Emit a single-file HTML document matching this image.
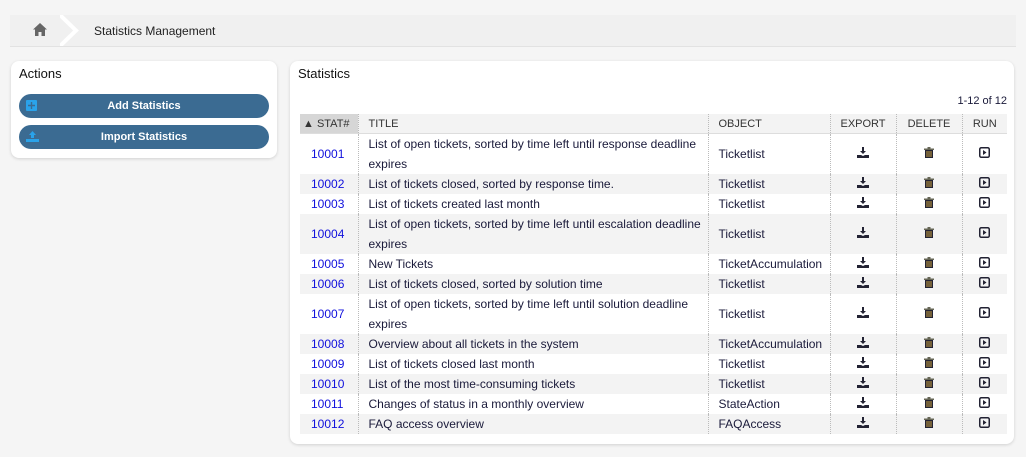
<!DOCTYPE html><html><head><style>
body{margin:0;width:1026px;height:457px;background:#f5f5f5;font-family:"Liberation Sans",sans-serif;font-size:12px;color:#1a1a3a;position:relative;overflow:hidden}
.bc{position:absolute;left:10px;top:15px;width:1006px;height:31px;background:#f0f0f0;border-bottom:1px solid #e2e2e2}
.panel{position:absolute;background:#fff;border-radius:8px;box-shadow:0 1px 3px rgba(0,0,0,.15)}
h2{font-size:13px;font-weight:normal;margin:0;position:absolute;left:8px;top:5px;color:#111}
.btn{position:absolute;left:8px;width:250px;height:24px;border-radius:12px;background:#3b6b92;color:#fff;font-weight:bold;font-size:11px;text-align:center;line-height:25px}
.btn svg{position:absolute;left:7px;top:6px}
table{position:absolute;left:10px;top:53px;border-collapse:collapse;width:707px;table-layout:fixed}
th{height:19px;font-weight:normal;font-size:11px;text-align:left;padding:0 0 0 10px;background:#f3f3f3;border-bottom:1px solid #ddd;border-left:1px dotted #bbb;color:#333}
th.c,td.c{text-align:center;padding:0}
td{padding:0 0 0 10px;line-height:20px;border-left:1px dotted #bbb;vertical-align:middle}
tr:nth-child(even) td{background:#f3f3f3}
td:first-child,th:first-child{border-left:none}
a{color:#1010dd;text-decoration:none}
</style></head><body>
<div class="bc">
<svg style="position:absolute;left:23px;top:8px" width="14" height="13" viewBox="0 0 14 13"><path d="M7 0L0 6.5h2V13h3.5V9h3v4H12V6.5h2z" fill="#666"/></svg>
<svg style="position:absolute;left:50px;top:0" width="20" height="31"><path d="M0 0L16 15.5 0 31" fill="#f0f0f0" stroke="#fff" stroke-width="4"/></svg>
<div style="position:absolute;left:84px;top:9px;color:#222">Statistics Management</div>
</div>
<div class="panel" style="left:11px;top:61px;width:266px;height:97px">
<h2>Actions</h2>
<div class="btn" style="top:33px"><svg width="11" height="11"><rect width="11" height="11" rx="1" fill="#2aa3ea"/><path d="M5.5 2v7M2 5.5h7" stroke="#3b6b92" stroke-width="1.4"/></svg>Add Statistics</div>
<div class="btn" style="top:64px"><svg width="13" height="11" viewBox="0 0 13 11"><path d="M6.5 0L10 4H8v3H5V4H3z" fill="#2aa3ea"/><path d="M0 8h13v3H0z" fill="#2aa3ea"/></svg>Import Statistics</div>
</div>
<div class="panel" style="left:290px;top:61px;width:724px;height:383px">
<h2>Statistics</h2>
<div style="position:absolute;right:7px;top:34px;font-size:11px">1-12 of 12</div>
<table>
<colgroup><col style="width:58px"><col style="width:350px"><col style="width:122px"><col style="width:66px"><col style="width:66px"><col></colgroup>
<tr><th style="background:#d6d6d6;padding-left:3px">▲ STAT#</th><th>TITLE</th><th>OBJECT</th><th class="c">EXPORT</th><th class="c">DELETE</th><th class="c">RUN</th></tr>
<tbody id="b"></tbody>
</table></div>
<script>
var d=[["10001","List of open tickets, sorted by time left until response deadline expires","Ticketlist"],["10002","List of tickets closed, sorted by response time.","Ticketlist"],["10003","List of tickets created last month","Ticketlist"],["10004","List of open tickets, sorted by time left until escalation deadline expires","Ticketlist"],["10005","New Tickets","TicketAccumulation"],["10006","List of tickets closed, sorted by solution time","Ticketlist"],["10007","List of open tickets, sorted by time left until solution deadline expires","Ticketlist"],["10008","Overview about all tickets in the system","TicketAccumulation"],["10009","List of tickets closed last month","Ticketlist"],["10010","List of the most time-consuming tickets","Ticketlist"],["10011","Changes of status in a monthly overview","StateAction"],["10012","FAQ access overview","FAQAccess"]];
var ex='<svg width="12" height="11" viewBox="0 0 12 11"><path d="M5 0h2v4h2L6 7 3 4h2z" fill="#223"/><path d="M0 8h4l2 1 2-1h4v3H0z" fill="#223"/></svg>';
var de='<svg width="10" height="11" viewBox="0 0 10 11"><path d="M0 1.5h10v1.5H0zM3.5 0h3v1.5h-3z" fill="#665"/><path d="M1 3h8v8H1z" fill="#223"/><path d="M2.5 4h1v6h-1zM4.5 4h1v6h-1zM6.5 4h1v6h-1z" fill="#c8a040"/></svg>';
var ru='<svg width="11" height="11" viewBox="0 0 11 11"><rect x=".75" y=".75" width="9.5" height="9.5" rx="1.5" fill="none" stroke="#223" stroke-width="1.5"/><path d="M4 3l3.5 2.5L4 8z" fill="#223"/></svg>';
var h='';d.forEach(function(r){h+='<tr><td style="padding-left:11px"><a>'+r[0]+'</a></td><td>'+r[1]+'</td><td>'+r[2]+'</td><td class="c">'+ex+'</td><td class="c">'+de+'</td><td class="c">'+ru+'</td></tr>'});
document.getElementById('b').innerHTML=h;
</script>
</body></html>
